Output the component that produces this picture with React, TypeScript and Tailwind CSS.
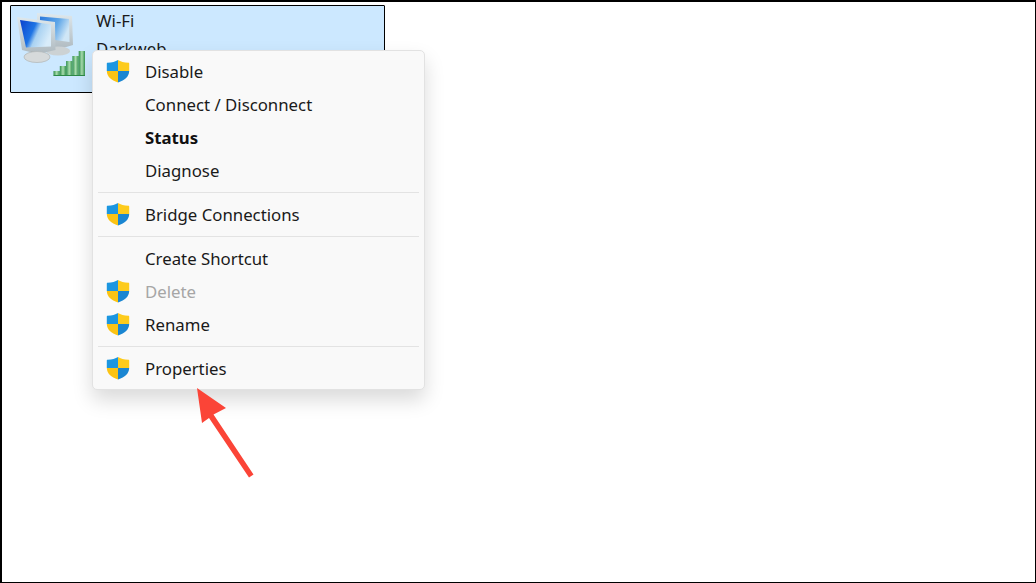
import React from "react";

function Shield() {
  return (
    <svg width="24" height="24" viewBox="0 0 24 24" className="block">
      <path d="M12 1 C9.5 2.6 6 3.6 1.5 3.8 C0.9 3.8 0.8 4.2 0.8 5 L0.8 12 L12 12 Z" fill="#1c96e0" />
      <path d="M12 1 C14.5 2.6 18 3.6 22.5 3.8 C23.1 3.8 23.2 4.2 23.2 5 L23.2 12 L12 12 Z" fill="#fdcb1c" />
      <path d="M0.8 12 C1 17.5 5 21 12 23.5 L12 12 Z" fill="#fbc313" />
      <path d="M23.2 12 C23 17.5 19 21 12 23.5 L12 12 Z" fill="#1a86d2" />
    </svg>
  );
}

function NetIcon() {
  const bars = [
    { x: 53.5, y: 71 },
    { x: 59.8, y: 66 },
    { x: 66.1, y: 61 },
    { x: 72.4, y: 56 },
    { x: 78.7, y: 51 },
  ];
  return (
    <svg width="75" height="75" viewBox="11 6 75 75" className="block shrink-0">
      <defs>
        <linearGradient id="scr" x1="0" y1="0.1" x2="1" y2="0.5">
          <stop offset="0" stopColor="#0b45cf" />
          <stop offset="0.45" stopColor="#1f74e4" />
          <stop offset="0.62" stopColor="#a9d2f2" />
          <stop offset="1" stopColor="#d8ecfa" />
        </linearGradient>
        <linearGradient id="scr2" x1="0" y1="0" x2="1" y2="0.4">
          <stop offset="0" stopColor="#2a78dc" />
          <stop offset="0.6" stopColor="#5ea6e8" />
          <stop offset="1" stopColor="#cfe6f6" />
        </linearGradient>
        <linearGradient id="bar" x1="0" y1="0" x2="1" y2="0">
          <stop offset="0" stopColor="#2f8f4c" />
          <stop offset="0.5" stopColor="#a9dcae" />
          <stop offset="1" stopColor="#36934f" />
        </linearGradient>
        <linearGradient id="bez" x1="0" y1="0" x2="0" y2="1">
          <stop offset="0" stopColor="#dfe8ec" />
          <stop offset="1" stopColor="#aeb9bf" />
        </linearGradient>
      </defs>
      <path d="M37 13 L72 16 L73 45 L56 50 L37 40 Z" fill="url(#bez)" />
      <path d="M40 16.5 L69 19 L69.5 42 L40 38 Z" fill="url(#scr2)" />
      <ellipse cx="58" cy="51" rx="12" ry="4.5" fill="#ccd2d4" />
      <path d="M17 17 L55 22 L55.5 50 L38 54 L22 50 Z" fill="url(#bez)" />
      <path d="M20 20 L51 24.5 L51 46.5 L26 47.5 Z" fill="url(#scr)" />
      <path d="M31 51 L44 53 L44 57 L31 55 Z" fill="#aab1b4" />
      <ellipse cx="37" cy="57" rx="13" ry="5.5" fill="#d6dadb" stroke="#b4babb" strokeWidth="0.8" />
      {bars.map((b) => (
        <rect key={b.x} x={b.x} y={b.y} width="6.3" height={75.5 - b.y} fill="url(#bar)" />
      ))}
      <path d="M53.5 75.5 L85 75.5" stroke="#2d8a47" strokeWidth="1" />
    </svg>
  );
}

function Item({ label, shield, bold, disabled }: { label: string; shield?: boolean; bold?: boolean; disabled?: boolean }) {
  return (
    <div className="flex h-[33px] items-center">
      <div className="flex w-[52px] shrink-0 justify-start pl-[13px] pb-[3px]">{shield ? <Shield /> : null}</div>
      <span className={`text-[16.8px] leading-[32px] pb-px ${bold ? "font-bold text-[#111]" : disabled ? "text-[#a6a6a6]" : "text-[#1a1a1a]"}`}>{label}</span>
    </div>
  );
}

function Sep({ className }: { className: string }) {
  return <div className={`mx-[5px] mt-[4px] h-px bg-[#e3e3e3] ${className}`} />;
}

export default function App() {
  return (
    <div className="relative h-[583px] w-[1036px] overflow-hidden border-t-2 border-r border-b border-l-2 border-black bg-white font-['Noto_Sans','Liberation_Sans',sans-serif]">
      <div className="ml-[8px] mt-[3px] flex h-[88px] w-[375px] gap-[10px] rounded-[1px] border border-black bg-[#cce8ff]">
        <NetIcon />
        <div className="pt-[1px] text-[16.8px] leading-[28px] text-[#1a1a1a]">
          <div>Wi-Fi</div>
          <div>Darkweb</div>
        </div>
      </div>
      <div className="absolute left-[90px] top-[48px] h-[340px] w-[333px] rounded-[5px] border border-[#e2e2e2] bg-[#f9f9f9] pt-[5px] shadow-[0_10px_20px_rgba(0,0,0,0.15)]">
        <Item label="Disable" shield />
        <Item label="Connect / Disconnect" />
        <Item label="Status" bold />
        <Item label="Diagnose" />
        <Sep className="mb-[6px]" />
        <Item label="Bridge Connections" shield />
        <Sep className="mb-[6px]" />
        <Item label="Create Shortcut" />
        <Item label="Delete" shield disabled />
        <Item label="Rename" shield />
        <Sep className="mb-[6px]" />
        <Item label="Properties" shield />
      </div>
      <svg width="70" height="100" viewBox="190 380 70 100" className="absolute left-[188px] top-[378px]">
        <path d="M197 388 L226 408 L213.5 414.5 L253.5 474.5 L249 477.5 L209 418 L202 423 Z" fill="#fb4437" />
      </svg>
    </div>
  );
}
